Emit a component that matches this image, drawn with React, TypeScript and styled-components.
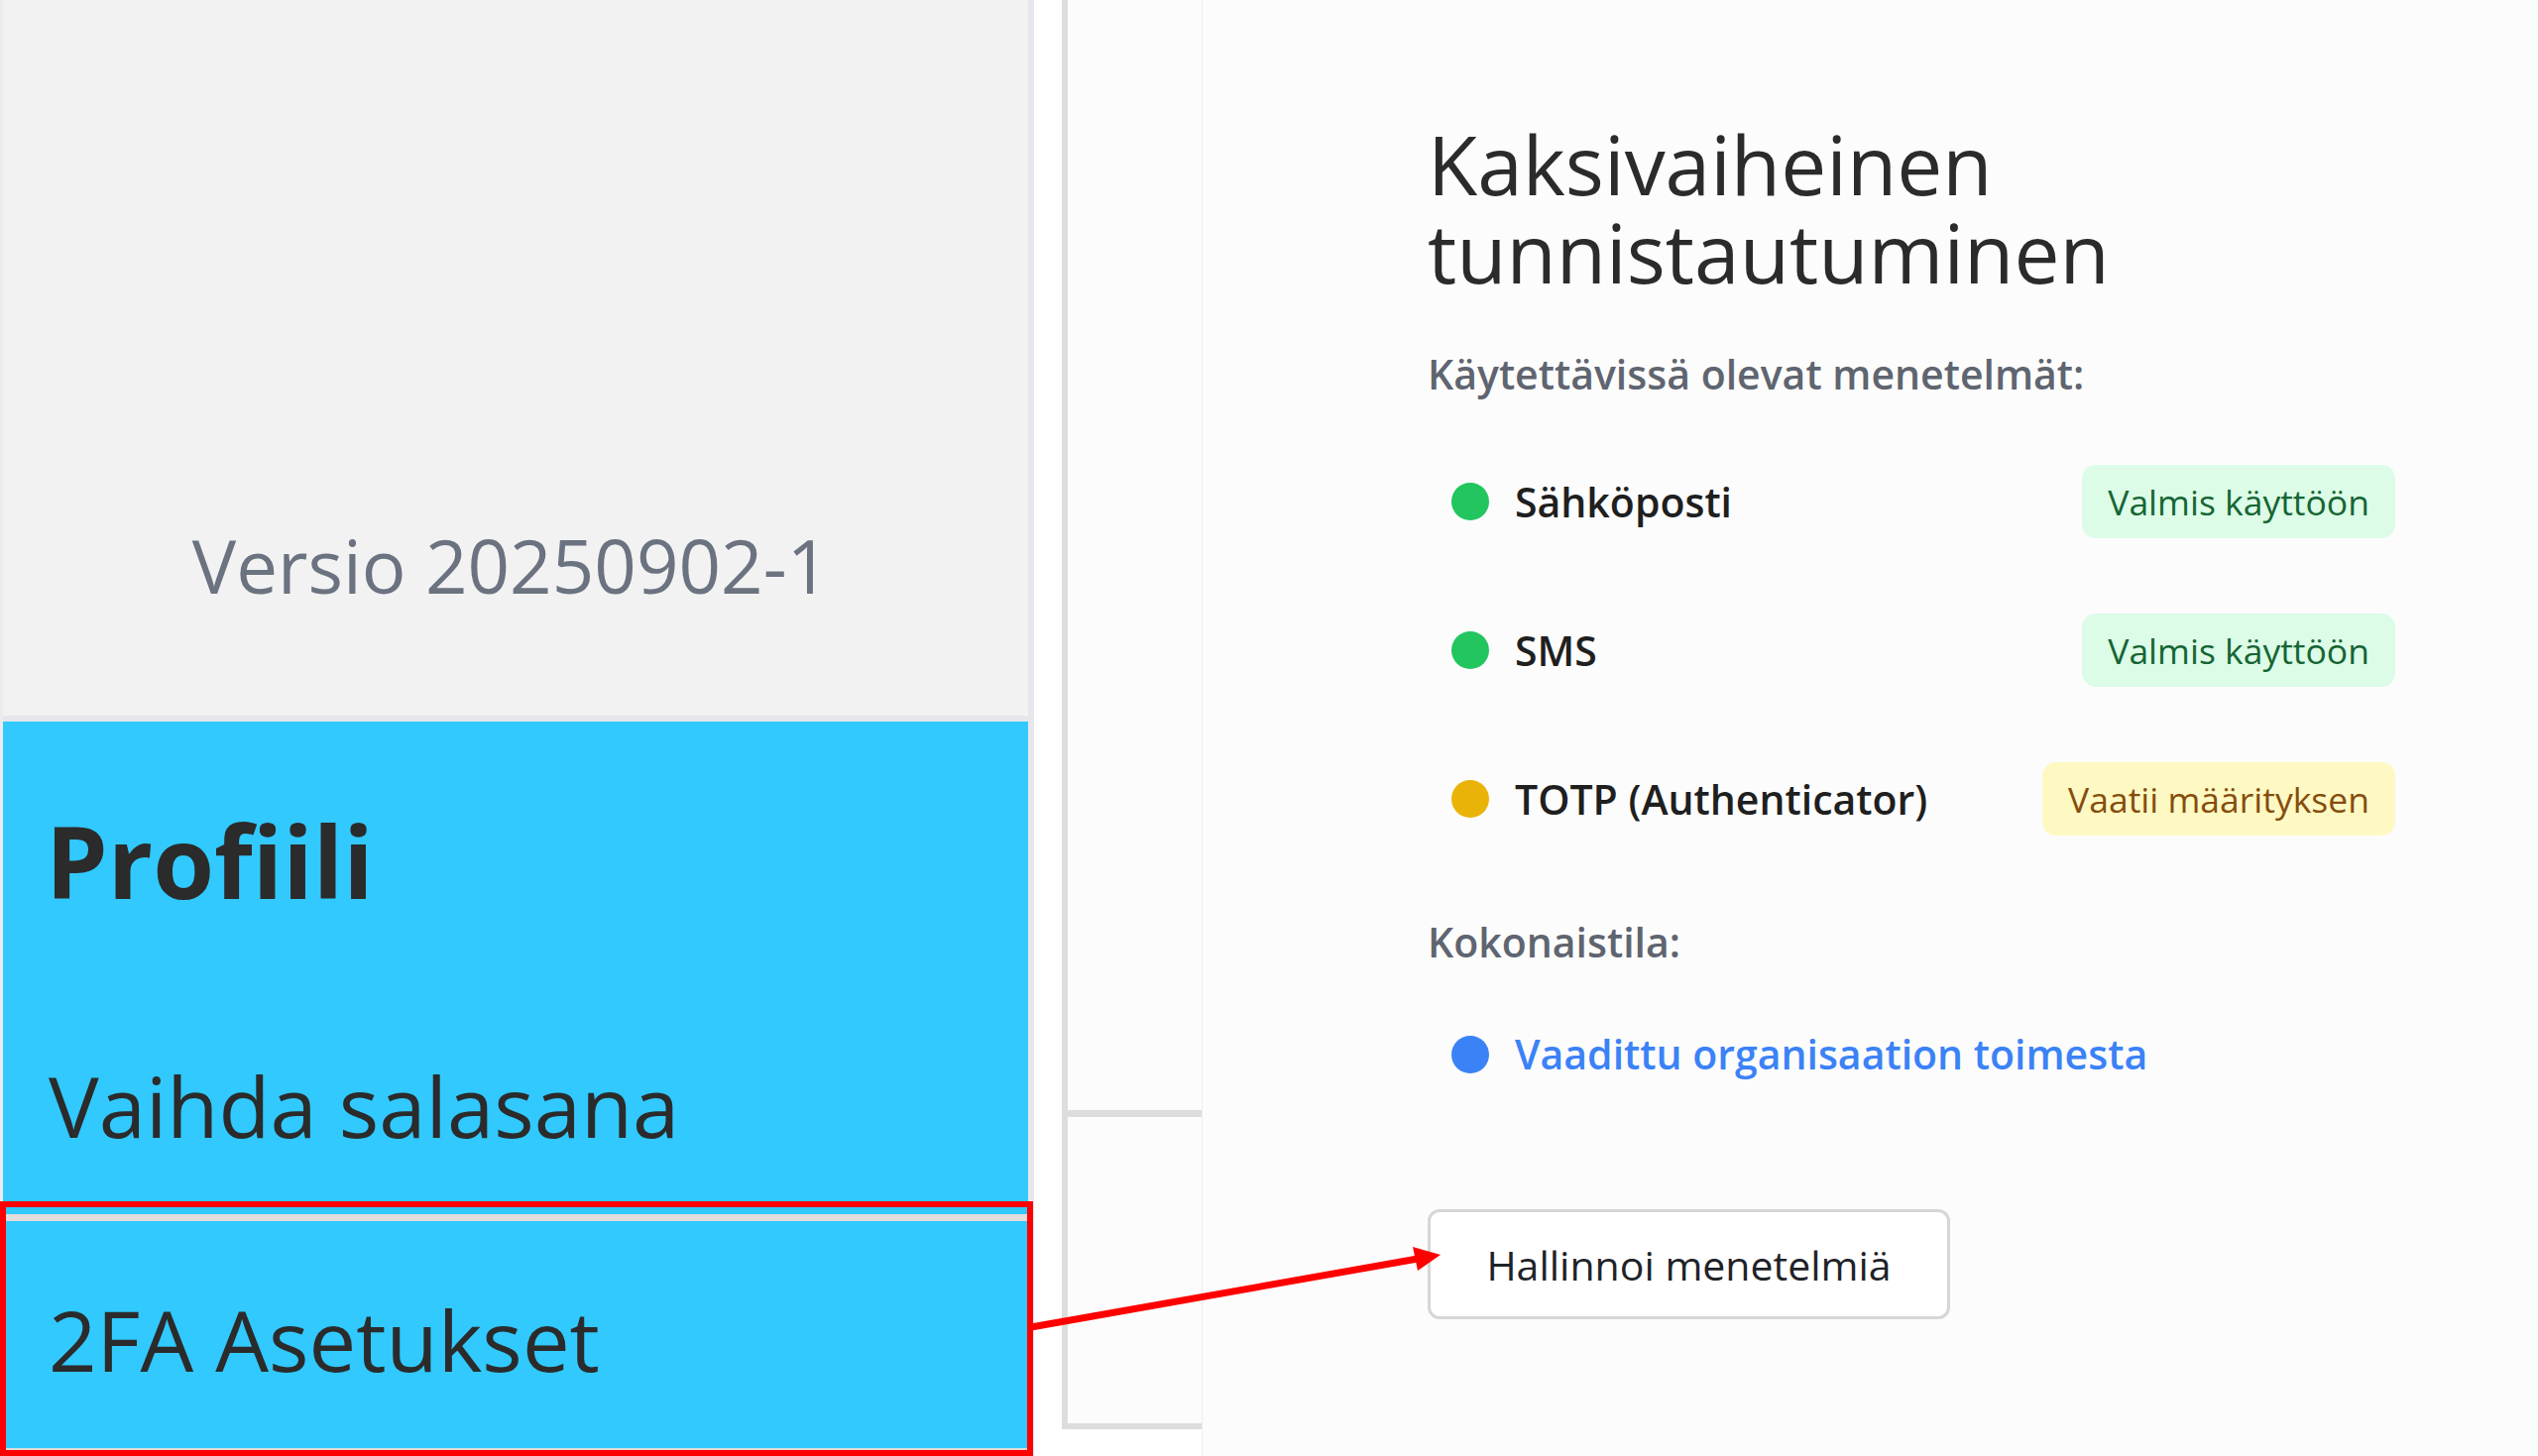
import React from "react";
import styled, { createGlobalStyle } from "styled-components";

const GlobalStyle = createGlobalStyle`
  html, body {
    margin: 0;
    padding: 0;
    background: #ffffff;
  }
  body {
    font-family: "Open Sans", "Noto Sans", sans-serif;
  }
  * {
    box-sizing: border-box;
  }
`;

const Page = styled.div`
  position: relative;
  display: flex;
  width: 2560px;
  height: 1469px;
  overflow: hidden;
  background: #ffffff;
`;

const Sidebar = styled.aside`
  flex: 0 0 1043px;
  display: flex;
  flex-direction: column;
  border-left: 3px solid #ececf0;
  border-right: 6px solid #e6e7ec;
  background: #f2f2f2;
`;

const SidebarTop = styled.div`
  flex: 0 0 728px;
  display: flex;
  align-items: flex-end;
  justify-content: center;
  padding: 0 10px 102px 0;
  border-bottom: 6px solid #e6e7ec;
`;

const Version = styled.div`
  font-size: 74.5px;
  line-height: 100px;
  color: #6b7280;
`;

const Menu = styled.nav`
  flex: 1;
  display: flex;
  flex-direction: column;
  background: #31c9fe;
  color: #2b2b2b;
`;

const MenuHeading = styled.h2`
  margin: 0;
  height: 268px;
  padding: 80px 0 0 43px;
  font-size: 100px;
  font-weight: 700;
  line-height: 120px;
`;

const MenuItem = styled.div`
  height: 236px;
  padding: 69px 0 0 46px;
  font-size: 85px;
  line-height: 100px;
  border-bottom: 7px solid #e2dcdc;
`;

const Middle = styled.div`
  flex: 0 0 141px;
  margin-left: 28px;
  height: 1442px;
  display: flex;
  flex-direction: column;
  background: #fcfcfc;
  border-left: 6px solid #dddddd;
  border-bottom: 6px solid #dddddd;
`;

const MiddleTop = styled.div`
  flex: 0 0 1127px;
  border-bottom: 7px solid #dddddd;
`;

const Main = styled.main`
  flex: 1;
  background: #fcfcfc;
  border-left: 1px solid #ececec;
  padding: 121px 0 0 227px;
`;

const Content = styled.section`
  width: 976px;
  display: flex;
  flex-direction: column;
`;

const Title = styled.h1`
  margin: 0;
  font-size: 82px;
  font-weight: 400;
  line-height: 89px;
  color: #2b2b2b;
`;

const SectionLabel = styled.div<{ $top: number }>`
  margin-top: ${(p) => p.$top}px;
  font-size: 41px;
  font-weight: 600;
  line-height: 53px;
  color: #5f6570;
`;

const MethodList = styled.div`
  margin-top: 65px;
  display: flex;
  flex-direction: column;
  gap: 76px;
`;

const MethodRow = styled.div`
  height: 74px;
  display: flex;
  align-items: center;
  justify-content: space-between;
  padding-left: 24px;
`;

const MethodName = styled.div<{ $color?: string }>`
  display: flex;
  align-items: center;
  gap: 26px;
  font-size: 41px;
  font-weight: 600;
  line-height: 53px;
  color: ${(p) => p.$color || "#1f1f1f"};
`;

const Dot = styled.span<{ $color: string }>`
  width: 38px;
  height: 38px;
  border-radius: 50%;
  background: ${(p) => p.$color};
  flex: 0 0 38px;
`;

const tones = {
  ready: { bg: "#dcfce7", fg: "#166534" },
  pending: { bg: "#fef9c3", fg: "#854d0e" },
};

const Badge = styled.span<{ $tone: keyof typeof tones }>`
  height: 74px;
  padding: 0 26px;
  border-radius: 14px;
  font-size: 35.5px;
  line-height: 74px;
  background: ${(p) => tones[p.$tone].bg};
  color: ${(p) => tones[p.$tone].fg};
`;

const StatusRow = styled.div`
  margin-top: 60px;
  padding-left: 24px;
`;

const ManageButton = styled.button`
  margin-top: 130px;
  align-self: flex-start;
  width: 527px;
  height: 111px;
  border: 3px solid #d6d6d6;
  border-radius: 12px;
  background: #ffffff;
  font-family: inherit;
  font-size: 41px;
  color: #1f2328;
`;

const Annotation = styled.svg`
  position: absolute;
  left: 0;
  top: 0;
  pointer-events: none;
`;

const methods = [
  { name: "Sähköposti", color: "#22c55e", tone: "ready" as const, label: "Valmis käyttöön" },
  { name: "SMS", color: "#22c55e", tone: "ready" as const, label: "Valmis käyttöön" },
  { name: "TOTP (Authenticator)", color: "#eab308", tone: "pending" as const, label: "Vaatii määrityksen" },
];

export default function App() {
  return (
    <>
      <GlobalStyle />
      <Page>
        <Sidebar>
          <SidebarTop>
            <Version>Versio 20250902-1</Version>
          </SidebarTop>
          <Menu>
            <MenuHeading>Profiili</MenuHeading>
            <MenuItem>Vaihda salasana</MenuItem>
            <MenuItem>2FA Asetukset</MenuItem>
          </Menu>
        </Sidebar>

        <Middle>
          <MiddleTop />
        </Middle>

        <Main>
          <Content>
            <Title>
              Kaksivaiheinen
              <br />
              tunnistautuminen
            </Title>
            <SectionLabel $top={52}>Käytettävissä olevat menetelmät:</SectionLabel>
            <MethodList>
              {methods.map((m) => (
                <MethodRow key={m.name}>
                  <MethodName>
                    <Dot $color={m.color} />
                    {m.name}
                  </MethodName>
                  <Badge $tone={m.tone}>{m.label}</Badge>
                </MethodRow>
              ))}
            </MethodList>
            <SectionLabel $top={81}>Kokonaistila:</SectionLabel>
            <StatusRow>
              <MethodName $color="#3b82f6">
                <Dot $color="#3b82f6" />
                Vaadittu organisaation toimesta
              </MethodName>
            </StatusRow>
            <ManageButton>Hallinnoi menetelmiä</ManageButton>
          </Content>
        </Main>

        <Annotation width="2560" height="1469" viewBox="0 0 2560 1469">
          <rect x="3" y="1215" width="1036" height="251" fill="none" stroke="#ff0000" strokeWidth="6" />
          <line x1="1040" y1="1339" x2="1430" y2="1270" stroke="#ff0000" strokeWidth="7" />
          <polygon points="1453,1266 1425,1258 1430,1282" fill="#ff0000" />
        </Annotation>
      </Page>
    </>
  );
}
